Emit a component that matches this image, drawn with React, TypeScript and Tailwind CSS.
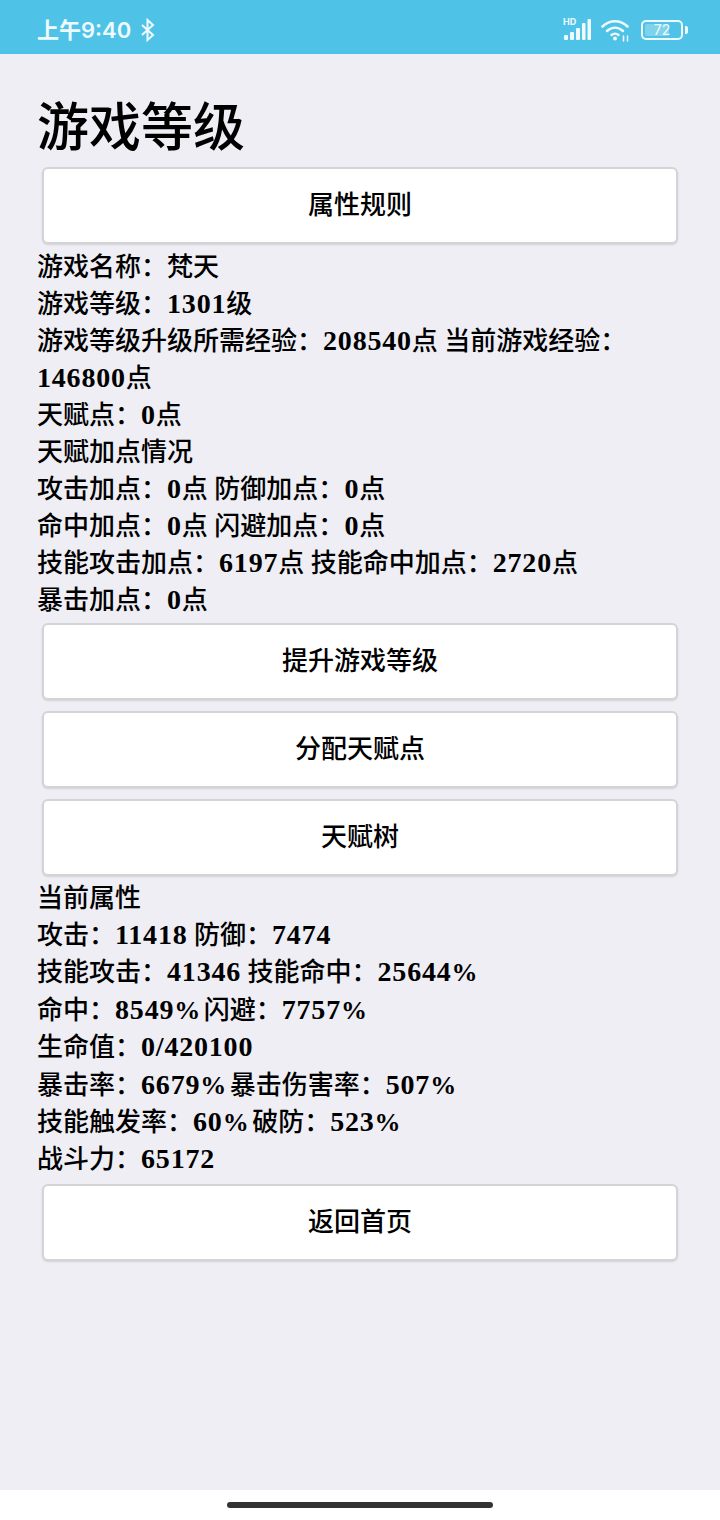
const FONT = '[font-family:"Liberation_Serif","Noto_Sans_CJK_SC",serif]';
const C = '\uFF1A'; // full-width colon

function StatusBar() {
  return (
    <div className="flex h-[54px] items-center justify-between bg-[#4ec3e7] pl-[37px] pr-[32px] pt-[5px] text-white">
      <div className="flex items-center gap-[9px]">
        <span className='text-[22px] font-semibold leading-none text-[#eefafd] [font-family:"Inter","Noto_Sans_CJK_SC",sans-serif]'>上午9:40</span>
        <svg width="16" height="24" viewBox="0 0 16 24" fill="none" stroke="#eefafd" strokeWidth="2">
          <path d="M2 7l11 10-5.500 5V2L13 7 2 17" />
        </svg>
      </div>
      <div className="flex items-center gap-[10px]">
        {/* signal */}
        <svg width="28" height="24" viewBox="0 0 28 24" fill="#eefafd" className="overflow-visible">
          <text x="0" y="7" fontSize="9" fontWeight="700" fontFamily="Inter, sans-serif">HD</text>
          <rect x="1" y="17" width="4" height="5" rx="1" />
          <rect x="7" y="14" width="4" height="8" rx="1" />
          <rect x="13" y="10" width="4" height="12" rx="1" />
          <rect x="19" y="5" width="3.500" height="17" rx="1" />
          <rect x="24.500" y="1" width="3.500" height="21" rx="1" />
        </svg>
        {/* wifi */}
        <svg width="30" height="24" viewBox="0 0 30 24" fill="none" stroke="#eefafd" strokeWidth="2.500" strokeLinecap="round">
          <path d="M1.500 8.500C8.500 1.500 19.500 1.500 26.500 8.500" />
          <path d="M6 13c5-4.500 11-4.500 16 0" />
          <path d="M10.500 17c2-1.800 5-1.800 7 0" />
          <circle cx="14" cy="20.500" r="2" fill="#eefafd" stroke="none" />
          <path d="M22.500 18v5M26.500 18v5" strokeWidth="1.500" />
        </svg>
        {/* battery */}
        <div className="flex items-center gap-[2px]">
          <div className="relative flex h-[20px] w-[42px] items-center justify-center overflow-hidden rounded-[5px] border-2 border-[#eefafd]">
            <div className="absolute inset-y-[2px] left-[2px] w-[24px] rounded-[2px] bg-[#7fd2ec]" />
            <span className='relative text-[14px] leading-none text-[#eefafd] [font-family:"Inter",sans-serif]'>72</span>
          </div>
          <div className="h-[8px] w-[3px] rounded-r-[2px] bg-[#eefafd]" />
        </div>
      </div>
    </div>
  );
}

function Btn({ children }: { children: React.ReactNode }) {
  return (
    <button className="mx-[5px] my-[5.500px] block h-[77px] w-[636px] rounded-[6px] border-2 border-[#d4d4d8] bg-white text-center text-[26px] font-medium leading-none text-black shadow-[0_1px_2px_rgba(0,0,0,0.12)]">
      {children}
    </button>
  );
}

// the numbers sit in a wider bold serif than Liberation, so size and track them up a bit
function N({ children, pct }: { children: React.ReactNode; pct?: boolean }) {
  return (
    <b className="text-[28px] font-bold leading-none tracking-[0.8px]">
      {children}
      {pct && <span className="text-[26px] tracking-[-3px]">%</span>}
    </b>
  );
}

export default function App() {
  return (
    <div className={`flex h-[1520px] w-[720px] flex-col bg-white text-black ${FONT}`}>
      <StatusBar />
      <main className="flex-1 bg-[#eeeef4] px-[37px] pt-[45px] text-[26px] font-medium">
        <h1 className="text-[52px] font-medium leading-[60px]">游戏等级</h1>
        <div className="mt-[8px]">
          <Btn>属性规则</Btn>
        </div>
        <div className="mb-[-1px] mt-[-1px] leading-[37px]">
          <div>游戏名称{C}梵天</div>
          <div>游戏等级{C}<N>1301</N>级</div>
          <div>游戏等级升级所需经验{C}<N>208540</N>点 当前游戏经验{C}<N>146800</N>点</div>
          <div>天赋点{C}<N>0</N>点</div>
          <div>天赋加点情况</div>
          <div>攻击加点{C}<N>0</N>点 防御加点{C}<N>0</N>点</div>
          <div>命中加点{C}<N>0</N>点 闪避加点{C}<N>0</N>点</div>
          <div>技能攻击加点{C}<N>6197</N>点 技能命中加点{C}<N>2720</N>点</div>
          <div>暴击加点{C}<N>0</N>点</div>
        </div>
        <div className="flex flex-col">
          <Btn>提升游戏等级</Btn>
          <Btn>分配天赋点</Btn>
          <Btn>天赋树</Btn>
        </div>
        <div className="mt-[-2px] leading-[37.400px]">
          <div>当前属性</div>
          <div>攻击{C}<N>11418</N> 防御{C}<N>7474</N></div>
          <div>技能攻击{C}<N>41346</N> 技能命中{C}<N pct>25644</N></div>
          <div>命中{C}<N pct>8549</N> 闪避{C}<N pct>7757</N></div>
          <div>生命值{C}<N>0/420100</N></div>
          <div>暴击率{C}<N pct>6679</N> 暴击伤害率{C}<N pct>507</N></div>
          <div>技能触发率{C}<N pct>60</N> 破防{C}<N pct>523</N></div>
          <div>战斗力{C}<N>65172</N></div>
        </div>
        <Btn>返回首页</Btn>
      </main>
      <div className="flex h-[30px] items-center justify-center bg-white">
        <div className="h-[6px] w-[266px] rounded-full bg-[#333333]" />
      </div>
    </div>
  );
}
